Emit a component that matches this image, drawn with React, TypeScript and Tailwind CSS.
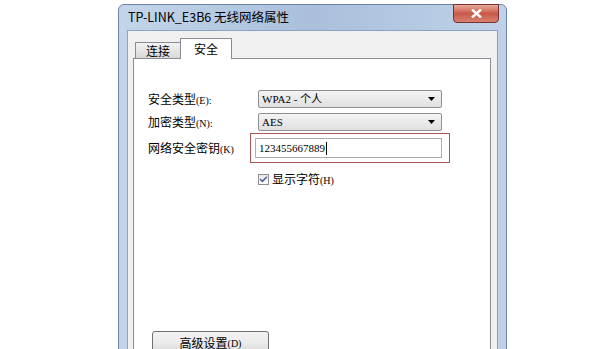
import { Check } from 'lucide-react';

const cjk = { fontFamily: '"Noto Sans CJK SC", "Noto Sans", sans-serif' };
const simsun = { fontFamily: '"Liberation Serif", "Noto Sans CJK SC", serif' };

function Select({ value }: { value: string }) {
  return (
    <div className="flex h-[18px] w-[184px] items-center justify-between rounded-[2px] border border-[#8e8f8f] bg-gradient-to-b from-[#f4f4f4] to-[#e0e0e0] pl-[3px] pr-[6px]">
      <span className="text-[11px] leading-none text-black" style={simsun}>
        {value}
      </span>
      <svg width="7" height="4" viewBox="0 0 7 4">
        <path d="M0 0h7L3.5 4z" fill="#000" />
      </svg>
    </div>
  );
}

export default function App() {
  return (
    <div className="h-[349px] w-[600px] overflow-hidden bg-white pl-[118px] pt-[4px]" style={cjk}>
      <div className="flex h-[360px] w-[389px] flex-col rounded-t-[6px] border border-[#6b83a6] bg-gradient-to-r from-[#c3d5ea] via-[#a9bfdb] to-[#bfd2e9] px-[8px]">
        {/* title bar */}
        <div className="relative flex h-[25px] items-center justify-between">
          <span className="pl-[1px] text-[12.5px] text-black">TP-LINK_E3B6 无线网络属性</span>
          <div className="absolute -top-[1px] right-[-1px] flex h-[19px] w-[46px] items-center justify-center rounded-b-[4px] border border-[#7a3030] bg-gradient-to-b from-[#e9a99b] via-[#c85a48] to-[#d88070]">
            <svg width="11" height="9" viewBox="0 0 11 9">
              <path d="M1 0.5l9 8M10 0.5l-9 8" stroke="#fff" strokeWidth="2.4" />
            </svg>
          </div>
        </div>

        {/* client area */}
        <div className="flex flex-1 flex-col border border-[#8ea2bf] bg-[#f0f0f0] pl-[5px] pr-[6px] pt-[7px]">
          <div className="flex items-end pl-[2px]">
            <div className="mb-[-1px] flex h-[17px] w-[45px] items-center justify-center border border-r-0 border-[#898c95] bg-gradient-to-b from-[#f2f2f2] to-[#d8d8d8] text-[12px] text-black">
              连接
            </div>
            <div className="relative z-10 mb-[-1px] flex h-[21px] w-[52px] items-start justify-center border border-b-0 border-[#898c95] bg-white pt-[1px] text-[12px] text-black">
              安全
            </div>
          </div>
          <div className="flex flex-1 flex-col border border-[#898c95] bg-white pl-[14px] pt-[31px]">
            <div className="flex items-center">
              <span className="w-[110px] text-[12px] text-black">
                安全类型<span className="text-[10px]" style={simsun}>(E):</span>
              </span>
              <Select value="WPA2 - 个人" />
            </div>
            <div className="mt-[5px] flex items-center">
              <span className="w-[110px] text-[12px] text-black">
                加密类型<span className="text-[10px]" style={simsun}>(N):</span>
              </span>
              <Select value="AES" />
            </div>
            <div className="mt-[2px] flex items-center">
              <span className="w-[102px] text-[12px] text-black">
                网络安全密钥<span className="text-[10px]" style={simsun}>(K)</span>
              </span>
              <div className="flex h-[30px] w-[200px] items-center border border-[#a8555a] pl-[4px]">
                <div className="flex h-[20px] w-[187px] items-center border border-[#abadb3] bg-white pl-[3px]">
                  <span className="text-[11px] leading-none text-black" style={simsun}>
                    123455667889
                  </span>
                  <span className="ml-[1px] h-[13px] w-[1px] bg-black" />
                </div>
              </div>
            </div>
            <div className="ml-[110px] mt-[7px] flex items-center gap-[3px]">
              <div className="flex h-[11px] w-[11px] items-center justify-center border border-[#8f8f8f] bg-gradient-to-b from-[#e6e6e6] to-[#ffffff]">
                <Check className="h-[9px] w-[9px] text-[#4a5f97]" strokeWidth={4} />
              </div>
              <span className="text-[12px] text-black">
                显示字符<span className="text-[10px]" style={simsun}>(H)</span>
              </span>
            </div>
            <div className="ml-[4px] mt-[143px] flex h-[24px] w-[117px] items-center justify-center rounded-[3px] border border-[#707070] bg-gradient-to-b from-[#f3f3f3] via-[#ebebeb] to-[#d6d6d6] text-[12px] text-black">
              高级设置<span className="text-[10px]" style={simsun}>(D)</span>
            </div>
          </div>
        </div>
      </div>
    </div>
  );
}
